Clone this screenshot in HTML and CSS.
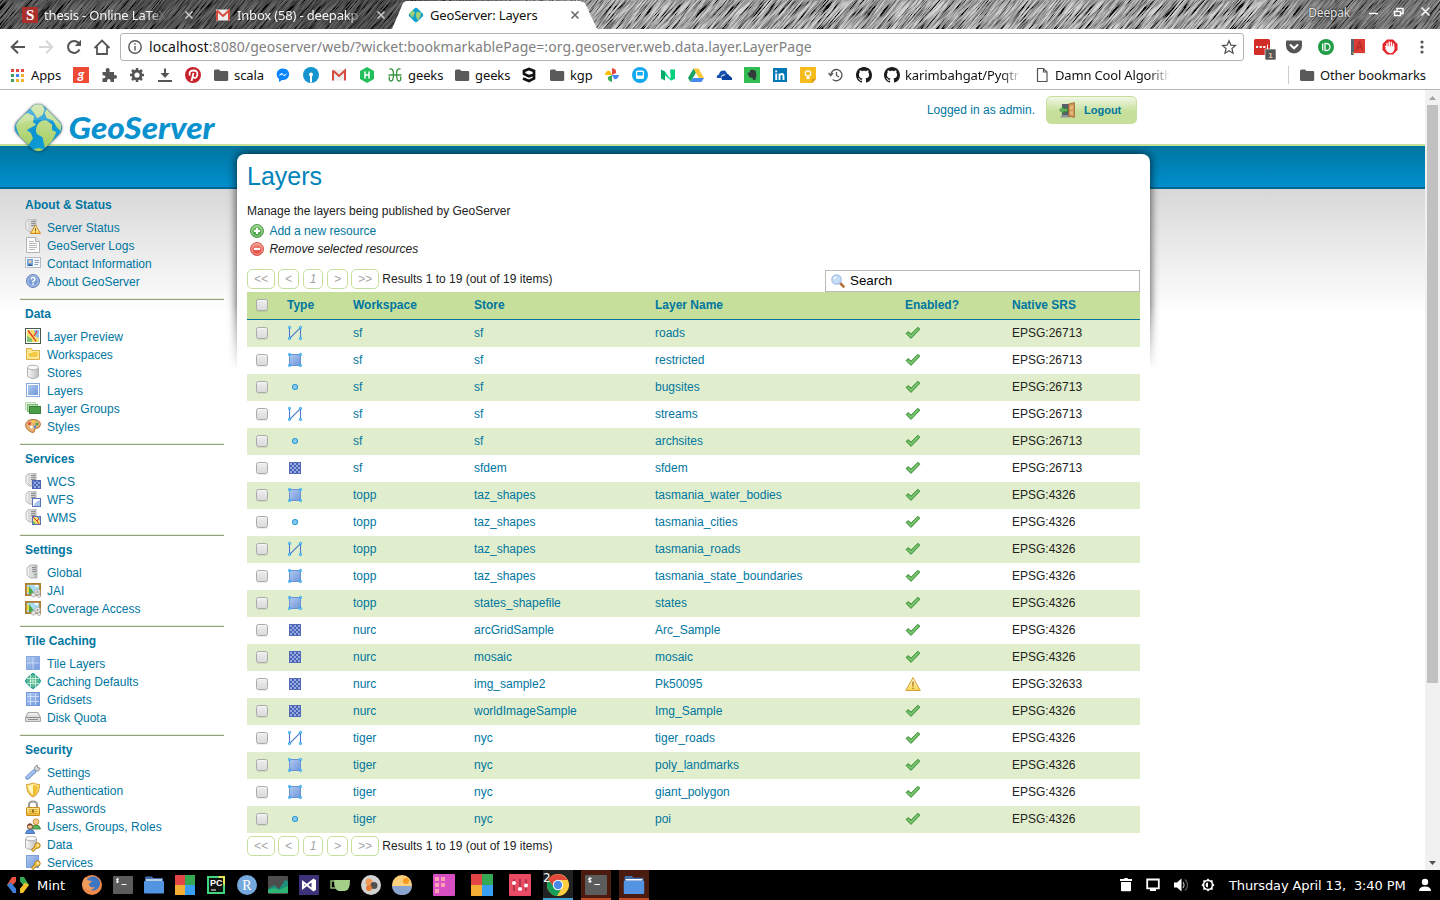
FILE: index.html
```html
<!DOCTYPE html>
<html lang="en">
<head>
<meta charset="utf-8">
<title>GeoServer: Layers</title>
<link rel="stylesheet" href="styles.css">
</head>
<body>
<svg class="defs" width="0" height="0">
<defs>
<filter id="hatch" x="0" y="0" width="100%" height="100%"><feTurbulence type="fractalNoise" baseFrequency="0.62 0.05" numOctaves="4" seed="4"/><feColorMatrix values="2.6 0 0 0 -.8  2.6 0 0 0 -.8  2.6 0 0 0 -.8  0 0 0 0 1"/></filter>
<linearGradient id="gSrv" x1="0" x2="1"><stop offset="0" stop-color="#fafafa"/><stop offset="1" stop-color="#bcbcbc"/></linearGradient>
<linearGradient id="gBlue" x1="0" y1="0" x2="1" y2="1"><stop offset="0" stop-color="#b0c9ef"/><stop offset="1" stop-color="#7097da"/></linearGradient>
<linearGradient id="gGreen" x1="0" y1="0" x2="0" y2="1"><stop offset="0" stop-color="#8fd080"/><stop offset="1" stop-color="#3a9436"/></linearGradient>
<linearGradient id="gRed" x1="0" y1="0" x2="0" y2="1"><stop offset="0" stop-color="#f59a90"/><stop offset="1" stop-color="#dd3a30"/></linearGradient>
<linearGradient id="gYel" x1="0" y1="0" x2="0" y2="1"><stop offset="0" stop-color="#fff0a0"/><stop offset="1" stop-color="#eeb72a"/></linearGradient>
<linearGradient id="gWarn" x1="0" y1="0" x2="0" y2="1"><stop offset="0" stop-color="#fffbe0"/><stop offset="1" stop-color="#f9d34e"/></linearGradient>
<linearGradient id="gGlobe" x1="0" y1="0" x2="1" y2="1"><stop offset="0" stop-color="#4fb8e2"/><stop offset=".5" stop-color="#0c93cf"/><stop offset="1" stop-color="#10a8e0"/></linearGradient>
<linearGradient id="gLand" x1="0" y1="0" x2="0" y2="1"><stop offset="0" stop-color="#d3e6b0"/><stop offset="1" stop-color="#9bcb50"/></linearGradient>
<clipPath id="dia"><rect x="7" y="7" width="36" height="36" rx="8" transform="rotate(45 25 25)"/></clipPath>
<pattern id="chk" width="4" height="4" patternUnits="userSpaceOnUse" x="1" y="1"><rect width="4" height="4" fill="#4a63b8"/><rect width="2" height="2" fill="#92aadc"/><rect x="2" y="2" width="2" height="2" fill="#92aadc"/></pattern>

<symbol id="line" viewBox="0 0 16 16"><path d="M2.500 13V2.500M2.500 13.500 13.500 2.500V13.500" fill="none" stroke="#4b7bd0" stroke-width="1.100"/><g fill="#8fd6fb" stroke="#1b9ff0" stroke-width="1"><circle cx="2.500" cy="2.500" r="1.100"/><circle cx="13.500" cy="2.500" r="1.100"/><circle cx="2.500" cy="13.500" r="1.100"/><circle cx="13.500" cy="13.500" r="1.100"/></g></symbol>
<symbol id="poly" viewBox="0 0 16 16"><rect x="2.500" y="2.500" width="11" height="11" fill="url(#gBlue)" stroke="#6b93d8"/><g fill="#8fd6fb" stroke="#1b9ff0" stroke-width="1"><circle cx="2.500" cy="2.500" r="1.100"/><circle cx="13.500" cy="2.500" r="1.100"/><circle cx="2.500" cy="13.500" r="1.100"/><circle cx="13.500" cy="13.500" r="1.100"/></g></symbol>
<symbol id="point" viewBox="0 0 16 16"><circle cx="8" cy="8" r="2.500" fill="#8dcaf0" stroke="#2a9ed8" stroke-width="1.100"/></symbol>
<symbol id="raster" viewBox="0 0 16 16"><rect x="2" y="2" width="12" height="12" fill="url(#chk)"/><rect x="2.500" y="2.500" width="11" height="11" fill="none" stroke="#5569b9"/></symbol>
<symbol id="tick" viewBox="0 0 16 16"><path d="M1 8.500 3.300 6.500 6 9 12.800 2.200 15 4.200 6 13.500z" fill="#58ae50" stroke="#3d8f3a" stroke-width=".8"/><path d="M3 8.500 6 11.200 13 4" fill="none" stroke="#84c97a" stroke-width="1.200"/></symbol>
<symbol id="warn" viewBox="0 0 16 16"><path d="M8 1.500 15.300 14.500H.7z" fill="url(#gWarn)" stroke="#d6a136" stroke-linejoin="round"/><path d="M8 5.500v5M8 11.700v1.400" stroke="#b07a1a" stroke-width="1.400"/></symbol>
<symbol id="srv" viewBox="0 0 16 16"><path d="M2 4 5 1h7v13H5L2 11z" fill="url(#gSrv)" stroke="#b0b0b0" stroke-width=".9"/><path d="M5 1.500V14" stroke="#cdcdcd"/><path d="M7 3.500h4M7 5.500h4M7 7.500h4" stroke="#8f8f8f" stroke-width="1"/><path d="M9.500 10.500h1.500" stroke="#4aa04a"/></symbol>
<symbol id="srvw" viewBox="0 0 16 16"><use href="#srv" width="16" height="16" x="-1" y="-1"/><path d="M10.500 6 15.500 14.500h-10z" fill="url(#gWarn)" stroke="#d08a20"/><path d="M10.500 9v3M10.500 12.700v1" stroke="#8b5a10"/></symbol>
<symbol id="logs" viewBox="0 0 16 16"><path d="M1.500.5h9l4 4v11h-13z" fill="#fcfcfc" stroke="#b2b2b2"/><path d="M10.500.5v4h4" fill="#e4e4e4" stroke="#b2b2b2"/><path d="M4 4.500h5M4 6.500h8M4 8.500h8M4 10.500h8M4 12.500h6" stroke="#a8a8a8" stroke-width=".8"/></symbol>
<symbol id="vcard" viewBox="0 0 16 16"><rect x=".5" y="2.500" width="15" height="10" fill="#f5f7fa" stroke="#b5bbc2"/><rect x="2" y="4" width="6" height="7" fill="#73a5df"/><circle cx="5" cy="6.500" r="1.500" fill="#f4d1a4"/><path d="M2.500 11q2.500-4 5 0z" fill="#365a9a"/><path d="M9.500 5.500H14M9.500 7.500H14M9.500 9.500H13" stroke="#8ba0b8"/></symbol>
<symbol id="help" viewBox="0 0 16 16"><circle cx="8" cy="8" r="6.500" fill="#7b9ed6" stroke="#6382b8"/><circle cx="8" cy="8" r="5.300" fill="none" stroke="#b2c7ea"/><path d="M6 6.300Q6.200 4.400 8 4.400T10 6.200Q10 7.300 8 8.300v1.200M8 10.500v1.500" fill="none" stroke="#fff" stroke-width="1.500"/></symbol>
<symbol id="map" viewBox="0 0 16 16"><rect x=".5" y=".5" width="15" height="15" fill="#fff" stroke="#4a5a4a"/><rect x="2" y="2" width="12" height="12" fill="#f3df6c"/><path d="M9 2h5v8l-3-1z" fill="#8fbff0"/><path d="M2 8 7 11v3H2z" fill="#7dc671"/><path d="M3 2.500 8 9l3 4.500M9 8l3-5" fill="none" stroke="#dc3b28" stroke-width="1.300"/></symbol>
<symbol id="folder" viewBox="0 0 16 16"><path d="M1.500 2.500h5l1 2h7v9h-13z" fill="#fce48c" stroke="#dfae45"/><path d="M3 6.500h4l1-1h5v6H3z" fill="#f3ca43" stroke="#fff3b8" stroke-width=".8"/></symbol>
<symbol id="db" viewBox="0 0 16 16"><path d="M2.500 3.500v9q5.500 4 11 0v-9" fill="url(#gSrv)" stroke="#b0b0b0"/><ellipse cx="8" cy="3.500" rx="5.500" ry="2.300" fill="#fafafa" stroke="#b0b0b0"/></symbol>
<symbol id="layer" viewBox="0 0 16 16"><rect x="1.500" y="1.500" width="13" height="13" fill="#fff" stroke="#8aa9e0"/><rect x="3" y="3" width="10" height="10" fill="url(#gBlue)"/></symbol>
<symbol id="layers" viewBox="0 0 16 16"><rect x=".5" y="2.500" width="10" height="7" fill="#e9f5e4" stroke="#b9d9b1"/><rect x="2.500" y="4.500" width="10" height="7" fill="#b7dcab" stroke="#7db874"/><rect x="4.500" y="6.500" width="11" height="7" fill="#4c9d48" stroke="#3a8239"/></symbol>
<symbol id="palette" viewBox="0 0 16 16"><path d="M8 1.500q7 0 7.500 5-.5 4-4.500 4-2 0-1.500 2T7 14.500Q.5 11.500.5 6.500 2 1.500 8 1.500z" fill="#e5b072" stroke="#b5733c"/><circle cx="4.500" cy="5.500" r="1.500" fill="#e04c3c"/><circle cx="8.500" cy="3.800" r="1.400" fill="#f4d73c"/><circle cx="12" cy="6" r="1.500" fill="#4fa850"/><circle cx="6.500" cy="9" r="1.500" fill="#fff"/><circle cx="10" cy="8.700" r="1.300" fill="#4b8ade"/></symbol>
<symbol id="wcs" viewBox="0 0 16 16"><use href="#srv" width="16" height="16" x="-1" y="-1"/><rect x="7.500" y="7.500" width="8" height="8" fill="url(#chk)" stroke="#4c62b2"/></symbol>
<symbol id="wfs" viewBox="0 0 16 16"><use href="#srv" width="16" height="16" x="-1" y="-1"/><rect x="7.500" y="7.500" width="8" height="8" fill="#fff" stroke="#5c70b8"/><path d="M9 15q0-4 6-6v6z" fill="#a9c6ef"/></symbol>
<symbol id="wms" viewBox="0 0 16 16"><use href="#srv" width="16" height="16" x="-1" y="-1"/><rect x="7.500" y="7.500" width="8" height="8" fill="#f3df6c" stroke="#5c70b8"/><path d="M12 8h3v4z" fill="#79b1ef"/><path d="m8 8 4 4 2 3M12 12l2-3" stroke="#d33" fill="none"/><path d="M8 12l3 3H8z" fill="#67b15c"/></symbol>
<symbol id="frame" viewBox="0 0 16 16"><rect x=".9" y="1.900" width="14.200" height="11.200" fill="#a8dcf4" stroke="#b07c2e" stroke-width="1.800"/><path d="M2 4v7l5-3z" fill="#f0d94a"/><path d="M4 12V4l6 8z" fill="#4ca84a"/><path d="m9 3 2 2h2V3z" fill="#fff"/><g fill="#e4e4e4" stroke="#a8a8a8" stroke-width=".7"><circle cx="12.500" cy="10" r="2.800"/><circle cx="8.500" cy="13" r="2.200"/><circle cx="14" cy="14" r="1.600"/></g><circle cx="12.500" cy="10" r="1" fill="#999"/></symbol>
<symbol id="tiles" viewBox="0 0 16 16"><rect x="1" y="1" width="14" height="14" fill="url(#gBlue)"/><path d="M8 1v14M1 8h14" stroke="#c9daf6" stroke-width="1"/><rect x="1.500" y="1.500" width="13" height="13" fill="none" stroke="#87a8e4"/></symbol>
<symbol id="cache" viewBox="0 0 16 16"><path d="M6 1.500Q8-.5 10 1.500L14.500 6q2 2 0 4L10 14.500q-2 2-4 0L1.500 10q-2-2 0-4z" fill="#54b894" stroke="#12918f"/><path d="M5.500 2v12M10.500 2v12M2 5.500h12M2 10.500h12M8 4.500v7M4.500 8h7" stroke="#e0f6df" stroke-width=".8"/></symbol>
<symbol id="grid" viewBox="0 0 16 16"><rect x="1" y="1" width="14" height="14" fill="url(#gBlue)"/><path d="M5.500 1v14M10.500 1v14M1 5.500h14M1 10.500h14" stroke="#d0dff8" stroke-width=".9"/><rect x="1.500" y="1.500" width="13" height="13" fill="none" stroke="#7398dc"/></symbol>
<symbol id="disk" viewBox="0 0 16 16"><path d="M3 3.500h10l2.500 5v4H.5v-4z" fill="#ddd" stroke="#a8a8a8"/><path d="M.8 8.500h14.500M3 10.500h10" stroke="#8c8c8c"/><path d="M4 5h8" stroke="#fff"/></symbol>
<symbol id="wrench" viewBox="0 0 16 16"><path d="m9.500 7 .2-4 2.600-2 .2 2.700 2.700.3-1.800 3-3.900.2z" fill="#d9d9d9" stroke="#8a8a8a" stroke-width=".9"/><path d="m2.500 13.500 6.500-6" stroke="#6f90cd" stroke-width="4.400" stroke-linecap="round"/><path d="m2.500 13.300 6.300-5.800" stroke="#a6c2ef" stroke-width="2.600" stroke-linecap="round"/></symbol>
<symbol id="shield" viewBox="0 0 16 16"><path d="M1.500 2.500Q5 2.500 8 1q3 1.500 6.500 1.500Q14.500 12 8 15 1.500 12 1.500 2.500z" fill="url(#gYel)" stroke="#d9a02c"/><path d="M3.500 4Q6 4 8 3v10Q4 10.500 3.500 4z" fill="#fff6c4"/><path d="M8 3q2 1 4.500 1Q12 10.500 8 13z" fill="#f1be30"/></symbol>
<symbol id="lock" viewBox="0 0 16 16"><path d="M4 8V5q0-3.500 4-3.500T12 5v3" fill="none" stroke="#9c9c9c" stroke-width="2.200"/><rect x="1.500" y="7.500" width="13" height="8" rx=".5" fill="url(#gYel)" stroke="#c98c20"/><path d="M3.500 9.500h9M3.500 11.500h9M3.500 13.500h9" stroke="#d79a24" stroke-width=".7"/><path d="M8 9.500v3" stroke="#7a5310" stroke-width="1.500"/></symbol>
<symbol id="users" viewBox="0 0 16 16"><path d="M6.500 11Q7 7 11 7t4.500 4z" fill="#5fb35a" stroke="#347f35" stroke-width=".8"/><circle cx="11" cy="3.800" r="2.900" fill="#f3ca8a" stroke="#c98a2c" stroke-width=".9"/><path d="M.6 15.500Q1 11.500 5 11.500t4.700 4z" fill="#5b93e0" stroke="#2f5fb0" stroke-width=".8"/><circle cx="5" cy="8.500" r="2.700" fill="#f2c79a" stroke="#74402a" stroke-width=".9"/><path d="M2.300 8Q3 5.500 5 5.500T7.700 8Q5 6.700 2.300 8z" fill="#74402a"/></symbol>
<symbol id="key" viewBox="0 0 16 16"><path d="m7 15 5-5" stroke="#b57812" stroke-width="3.200"/><circle cx="12.500" cy="9.500" r="2.700" fill="#f5cf55" stroke="#b57812"/><path d="m7.500 14.500 5-5" stroke="#f7d767" stroke-width="1.500"/><circle cx="13" cy="9" r=".8" fill="#fff"/></symbol>
<symbol id="dbkey" viewBox="0 0 16 16"><use href="#db" width="16" height="16" x="-2" y="-1"/><use href="#key" width="16" height="16"/></symbol>
<symbol id="svckey" viewBox="0 0 16 16"><rect x="1.500" y="1.500" width="12" height="12" fill="url(#gBlue)" stroke="#7d9fdb"/><use href="#key" width="16" height="16"/></symbol>
<symbol id="plus" viewBox="0 0 16 16"><circle cx="8" cy="8" r="6.500" fill="url(#gGreen)" stroke="#4f9a4c"/><circle cx="8" cy="8" r="5.300" fill="none" stroke="#b9e2af" stroke-width=".8"/><path d="M8 5v6M5 8h6" stroke="#fff" stroke-width="2"/></symbol>
<symbol id="minus" viewBox="0 0 16 16"><circle cx="8" cy="8" r="6.500" fill="url(#gRed)" stroke="#d0554b"/><circle cx="8" cy="8" r="5.300" fill="none" stroke="#f7bab3" stroke-width=".8"/><path d="M5 8h6" stroke="#fff" stroke-width="2"/></symbol>
<symbol id="search" viewBox="0 0 16 16"><path d="m10.500 10.500 3 3" stroke="#b3703a" stroke-width="2.600" stroke-linecap="round"/><circle cx="6.500" cy="6.500" r="4.700" fill="#c4dcf6" stroke="#a3c0e6" stroke-width="1.200"/><path d="M4 6q.5-2 2.500-2" fill="none" stroke="#fff" stroke-width="1.200"/></symbol>
<symbol id="door" viewBox="0 0 16 16"><path d="M3 2h8v11H3z" fill="#555f66"/><path d="M1 15.500 3 13h8v2.500z" fill="#8d949a"/><path d="m9.500 2 6-1.500v15l-6-1.500z" fill="#cf9355" stroke="#98602c" stroke-width=".7"/><path d="m11 4 3-.7v4L11 8zm0 5.500 3-.5v4l-3-.7z" fill="#e6b67d"/><path d="M.5 8 4.500 4.500v2h4v3.200h-4v2z" fill="#63b65e" stroke="#2d7f34" stroke-width=".7"/></symbol>

<symbol id="bfolder" viewBox="0 0 16 16"><path d="M1 4q0-1.500 1.500-1.500H6L7.500 4H14q1.200 0 1.200 1.200v7.300q0 1.500-1.500 1.500h-11Q1 14 1 12.500z" fill="#5a5a5a"/></symbol>
<symbol id="github" viewBox="0 0 16 16"><path fill="#1b1b1b" d="M8 0C3.580 0 0 3.580 0 8c0 3.540 2.290 6.530 5.470 7.590.4.070.55-.17.55-.38 0-.19-.01-.82-.01-1.490-2.010.37-2.530-.49-2.690-.94-.09-.23-.48-.94-.82-1.130-.28-.15-.68-.52-.01-.53.63-.01 1.080.58 1.230.82.72 1.210 1.870.87 2.330.66.070-.52.28-.87.51-1.070-1.780-.2-3.640-.89-3.640-3.950 0-.87.31-1.590.82-2.150-.08-.2-.36-1.020.08-2.120 0 0 .67-.21 2.200.82.64-.18 1.320-.27 2-.27s1.360.09 2 .27c1.530-1.040 2.200-.82 2.200-.82.44 1.100.16 1.920.08 2.120.51.56.82 1.270.82 2.150 0 3.070-1.870 3.750-3.650 3.950.29.25.54.73.54 1.480 0 1.070-.01 1.930-.01 2.200 0 .21.15.46.55.38A8.010 8.010 0 0 0 16 8c0-4.420-3.580-8-8-8z"/></symbol>
<symbol id="gmail" viewBox="0 0 16 16"><path d="M1 2.500h14v11H1z" fill="#ececec"/><path d="M2 3.500 8 9l6-5.500v10M2 13.500v-10" fill="none" stroke="#d54b3d" stroke-width="2"/></symbol>
<symbol id="term" viewBox="0 0 20 20"><rect y="1" width="20" height="18" rx="1" fill="#5c5c5c"/><path d="M6 4H4q-1.500 1 0 1.500t1.500 1.500H3M4.500 3v5M8.500 9.500h5" fill="none" stroke="#fff"/></symbol>
<symbol id="files" viewBox="0 0 20 20"><path d="M1 3q0-1.500 1-1.500h6L9.500 3H19v7H1z" fill="#3f6cab"/><rect x="0" y="6" width="20" height="12.500" rx="1" fill="#5294e2"/><path d="M2 5h16" stroke="#fff" stroke-width="1.300"/></symbol>
<symbol id="quad" viewBox="0 0 20 20"><path d="M0 0h10v10H0z" fill="#e34444"/><path d="M10 0h10v10H10z" fill="#35a853"/><path d="M0 10h10v10H0z" fill="#f3ae35"/><path d="M10 10h10v10H10z" fill="#389ff3"/></symbol>
<symbol id="close" viewBox="0 0 10 10"><path d="m1.500 1.500 7 7m0-7-7 7" fill="none" stroke="currentColor" stroke-width="1.500"/></symbol>
</defs>
</svg>

<div class="tabstrip">
  <svg class="hatch" width="1540" height="29"><rect width="1540" height="29" filter="url(#hatch)"/></svg>
  <div class="tab"><svg width="16" height="16" viewBox="0 0 16 16"><rect width="16" height="16" fill="#a9302c"/><text x="8" y="13" class="fav-s">S</text></svg><span class="tab-title">thesis - Online LaTeX</span><svg class="x" width="10" height="10"><use href="#close"/></svg></div>
  <div class="tab second"><svg width="16" height="16"><use href="#gmail"/></svg><span class="tab-title">Inbox (58) - deepakp</span><svg class="x" width="10" height="10"><use href="#close"/></svg></div>
  <div class="tab active"><svg width="16" height="16" viewBox="0 0 50 50"><g clip-path="url(#dia)"><path d="M0 0h50v50H0z" fill="#129fca"/><path d="M4 20 14 10l8 8-8 16zM27 15l14 2-2 12-8 14-7-16z" fill="#9fd078"/></g></svg><span class="tab-title">GeoServer: Layers</span><svg class="x" width="10" height="10"><use href="#close"/></svg></div>
  <div class="wincontrols"><span>Deepak</span><svg width="64" height="14" viewBox="0 0 64 14" fill="none" stroke="#fff" stroke-width="1.500"><path d="M1 7.500h9M26.500 5.500h6v4h-6zM29 4.500v-2h6v5h-2.500M53.500 1.500l8 8m0-8-8 8"/></svg></div>
</div>

<div class="toolbar">
  <svg width="16" height="16" viewBox="0 0 16 16" fill="none" stroke="#555" stroke-width="2"><path d="M15 8H2M8 1.700 1.700 8 8 14.300"/></svg>
  <svg width="16" height="16" viewBox="0 0 16 16" fill="none" stroke="#d6d6d6" stroke-width="2"><path d="M1 8h13M8 1.700 14.300 8 8 14.300"/></svg>
  <svg width="16" height="16" viewBox="0 0 16 16" fill="none" stroke="#555" stroke-width="2"><path d="M13.500 10.500A6 6 0 1 1 12.600 4"/><path d="M15 .8V7H8.800z" fill="#555" stroke="none"/></svg>
  <svg width="18" height="16" viewBox="0 0 18 16" fill="none" stroke="#555" stroke-width="1.800"><path d="M.5 9 8 1.500 15.500 9M3 7.500V15h10V7.500"/></svg>
  <div class="omnibox">
    <svg width="14" height="14" viewBox="0 0 14 14" fill="none" stroke="#555" stroke-width="1.400"><circle cx="7" cy="7" r="6.200"/><path d="M7 6v4.500M7 3.300v1.500"/></svg>
    <span class="url"><b>localhost</b>:8080/geoserver/web/?wicket:bookmarkablePage=:org.geoserver.web.data.layer.LayerPage</span>
    <svg width="16" height="16" viewBox="0 0 16 16" fill="none" stroke="#555" stroke-width="1.300"><path d="m8 1.800 1.900 4.300 4.600.4L11 9.600l1 4.600-4-2.400-4 2.400 1-4.600-3.500-3.100 4.600-.4z"/></svg>
  </div>
  <div class="exts">
    <svg width="24" height="24" viewBox="0 0 24 24"><rect x="2" y="3" width="16" height="16" rx="1.500" fill="#d32d27"/><path d="M4 11h2.200M7.600 11h2.200M11.200 11h2.200" stroke="#fff" stroke-width="2.200"/><path d="M15.500 8.500v5" stroke="#fff" stroke-width="1"/><rect x="13" y="13" width="11" height="11" rx="1" fill="#555" stroke="#fff" stroke-width=".6"/><text x="18.500" y="21.500" class="badge">1</text></svg>
    <svg width="16" height="16" viewBox="0 0 16 16"><path d="M1 1.500h14q1 0 1 1V7q-.5 6.500-8 7.500Q.5 13.500 0 7V2.500q0-1 1-1z" fill="#555"/><path d="m4.500 6 3.500 3.300L11.500 6" fill="none" stroke="#fff" stroke-width="2" stroke-linecap="round"/></svg>
    <svg width="16" height="16" viewBox="0 0 16 16"><circle cx="8" cy="8" r="8" fill="#1f9d45"/><path d="M4.700 4.500v7M7 4.500h1.500a3.500 3.500 0 0 1 0 7H7z" fill="none" stroke="#fff" stroke-width="1.300"/></svg>
    <svg width="16" height="16" viewBox="0 0 16 16"><path d="M1 0h3v16H1z" fill="#56666f"/><path d="M4 0h11v14H4z" fill="#dd3b35"/><path d="M4 14h11v1.500H4z" fill="#eee"/><path d="m6.500 11 3-8 3 8m-5-2.500h4" fill="none" stroke="#b52c29" stroke-width="1.400"/><path d="m2 13 2 1v2z" fill="#f5c236"/></svg>
    <svg width="16" height="16" viewBox="0 0 16 16"><path d="M5 .5h6L15.500 5v6L11 15.500H5L.5 11V5z" fill="#e4252c"/><path d="M5 8.500V4.500M7.200 8V3M9.400 8V3.500M11.500 9V5M5 8.500l-1.500-1M5 8h6.800v2q-1 3.500-3.500 3.500Q6 13.500 4 9.500z" fill="#fff" stroke="#fff" stroke-width="1.400" stroke-linecap="round"/></svg>
    <svg width="16" height="16" viewBox="0 0 16 16" fill="#555"><circle cx="8" cy="3" r="1.600"/><circle cx="8" cy="8" r="1.600"/><circle cx="8" cy="13" r="1.600"/></svg>
  </div>
</div>

<div class="bookmarks">
  <div class="bm"><svg width="16" height="16" viewBox="0 0 16 16"><path d="M2 2h3v3H2zM7 2h3v3H7zM12 2h3v3h-3z" fill="#e2483d"/><path d="M2 7h3v3H2z" fill="#3d9f58"/><path d="M7 7h3v3H7z" fill="#4285f4"/><path d="M12 7h3v3h-3zM12 12h3v3h-3zM7 12h3v3H7z" fill="#f2b32c"/><path d="M2 12h3v3H2z" fill="#3d9f58"/></svg><span class="w-apps">Apps</span></div>
  <svg width="16" height="16" viewBox="0 0 16 16"><rect width="16" height="16" fill="#ee4b36"/><text x="8" y="11.500" class="fav-g">g</text></svg>
  <svg width="16" height="16" viewBox="0 0 16 16"><path d="M1.500 5H5q-1-4 1.700-4T8.500 5H13v3.300q3-.8 3 1.600t-3 1.600V15H9.500q.5-3-1.700-3t-1.600 3H1.500v-3.800q3 .4 3-1.500t-3-1.500z" fill="#555"/></svg>
  <svg width="16" height="16" viewBox="0 0 16 16"><circle cx="8" cy="8" r="4" fill="none" stroke="#555" stroke-width="2.800"/><path d="M8 1v2.500M8 12.500V15M1 8h2.500M12.500 8H15M3 3l2 2M11 11l2 2M3 13l2-2M11 5l2-2" stroke="#555" stroke-width="2.500"/></svg>
  <svg width="16" height="16" viewBox="0 0 16 16"><path d="M8 1.500v7M1 14h14" fill="none" stroke="#555" stroke-width="2"/><path d="M3.500 6h9L8 11z" fill="#555"/></svg>
  <svg width="16" height="16" viewBox="0 0 16 16"><circle cx="8" cy="8" r="8" fill="#c8232c"/><path d="M6.500 14 8.500 6M4.800 8.600Q3.500 3.500 8.300 3.500t4 4.500-5 2" fill="none" stroke="#fff" stroke-width="1.800"/></svg>
  <div class="bm"><svg width="16" height="16"><use href="#bfolder"/></svg><span class="w-scala">scala</span></div>
  <svg width="16" height="16" viewBox="0 0 16 16"><path d="M8 1.500c7.500 0 8.500 10 1 11.500H7l-3 2v-3C-.5 8 2 1.500 8 1.500z" fill="#0a84ff"/><path d="m3.500 9 3-3.200L9 8l3.500-2-3 3.300L7 7.500z" fill="#fff"/></svg>
  <svg width="16" height="16" viewBox="0 0 16 16"><circle cx="8" cy="8" r="8" fill="#1494cf"/><circle cx="8" cy="7.500" r="2" fill="#fff"/><path d="M7 8h2v7.500H7z" fill="#fff"/></svg>
  <svg width="16" height="16"><use href="#gmail"/></svg>
  <svg width="16" height="16" viewBox="0 0 16 16"><path d="m8 0 7 4v8l-7 4-7-4V4z" fill="#24be5a"/><path d="M6 4.500v7M10 4.500v7M6 8h4" stroke="#fff" stroke-width="1.500"/></svg>
  <div class="bm"><svg width="16" height="16" viewBox="0 0 16 16" fill="none" stroke="#3a9442" stroke-width="1.400"><path d="M2.500 2Q6.500 1 6.500 7q0 7-2.500 7T2.500 9.500M13.500 2Q9.500 1 9.500 7q0 7 2.500 7t1.500-4.500M1.500 8h13"/></svg><span class="w-geeks">geeks</span></div>
  <div class="bm"><svg width="16" height="16"><use href="#bfolder"/></svg><span class="w-geeks">geeks</span></div>
  <svg width="16" height="16" viewBox="0 0 16 16"><path d="M13 7.500 8 9.300 3 7V4l5-2 5 2v7.500L8 14l-6-2.500" fill="none" stroke="#111" stroke-width="2.700"/></svg>
  <div class="bm"><svg width="16" height="16"><use href="#bfolder"/></svg><span class="w-kgp">kgp</span></div>
  <svg width="16" height="16" viewBox="0 0 16 16"><path d="M8 8V1q5 1 4 5z" fill="#e8453c"/><path d="M8 8h7q-1 5-5 4z" fill="#4688f1"/><path d="M8 8v7q-5-1-4-5z" fill="#3aa757"/><path d="M8 8H1q1-5 5-4z" fill="#fbbc05"/></svg>
  <svg width="16" height="16" viewBox="0 0 16 16"><circle cx="8" cy="8" r="8" fill="#12a9ef"/><rect x="4" y="3.500" width="8" height="8.500" rx="1.500" fill="#fff"/><path d="M5.200 5h5.600v3.500H5.200zM5 12h1.500v1.500H5zM9.500 12H11v1.500H9.500z" fill="#12a9ef"/></svg>
  <svg width="16" height="16" viewBox="0 0 16 16"><path d="M1 2.500 5 4.500v9l-4-2z" fill="#00ab6c"/><path d="m5 4.500 5 7 5-9v9l-4 2-6-5z" fill="#12d988"/><path d="m10 2.500 5 0v9l-4 2z" fill="#00cf7d"/></svg>
  <svg width="16" height="16" viewBox="0 0 16 16"><path d="M5.500 1.500 0 11l2.500 4L8 5.500z" fill="#19a463"/><path d="M5.500 1.500h5L16 11h-5z" fill="#fbc835"/><path d="M5 11h11l-2.500 4h-11z" fill="#4688f1"/></svg>
  <svg width="16" height="16" viewBox="0 0 16 16"><path d="M1 11q-1-3 2-3.500Q4 3 8 3.500q3 .5 3 4h-3q-3 0-3 3.500z" fill="#1451ac"/><path d="M6 13q-2-4 2.500-4.500 3-3.500 5 .5 3 .5 2.500 4z" fill="#0842a0"/></svg>
  <svg width="16" height="16" viewBox="0 0 16 16"><rect width="16" height="16" fill="#31bd51"/><path d="M3.500 5.500H6V3q5-1 6 1.500.9 4-.5 8-3 1.500-2.500-1L7 10.500q-2 1-3.500-5z" fill="#333b3b"/></svg>
  <svg width="16" height="16" viewBox="0 0 16 16"><rect x="1" y="1" width="14" height="14" fill="#0077b5"/><path d="M4.200 6.500V13M7.500 13V6.500M4.200 3.500v1.700M7.500 9q.5-2 2.200-2t1.800 2v4" fill="none" stroke="#fff" stroke-width="1.900"/></svg>
  <svg width="16" height="16" viewBox="0 0 16 16"><path d="M0 0h16v12l-4 4H0z" fill="#f6bb1c"/><path d="M16 12h-4v4z" fill="#d99a10"/><circle cx="8" cy="6.500" r="2.700" fill="none" stroke="#fff" stroke-width="1.200"/><path d="M6.500 10h3v2h-3z" fill="#fff"/></svg>
  <svg width="16" height="16" viewBox="0 0 16 16" fill="none" stroke="#555" stroke-width="1.300"><path d="M2.700 8a5.600 5.600 0 1 1 2 4.400M.5 6l2.200 2.700L5 6M8.500 5v3.500l2.500 1.500"/></svg>
  <svg width="16" height="16"><use href="#github"/></svg>
  <div class="bm"><svg width="16" height="16"><use href="#github"/></svg><span class="w-karim fade">karimbahgat/Pyqtr</span></div>
  <div class="bm"><svg width="16" height="16" viewBox="0 0 16 16"><path d="M3.500 1.500h6l3.500 3.500v9.500H3.500zM9.500 1.500V5H13" fill="#fff" stroke="#555" stroke-width="1.200"/></svg><span class="w-damn fade">Damn Cool Algorith</span></div>
  <div class="bm other"><svg width="16" height="16"><use href="#bfolder"/></svg><span>Other bookmarks</span></div>
</div>

<div class="viewport">
  <div class="page">
    <header class="header">
      <svg class="logo" width="210" height="56" viewBox="0 0 210 56"><g transform="translate(.8 1.300) scale(1.060)"><rect x="7" y="7" width="36" height="36" rx="8" transform="rotate(45 25 25)" class="logo-shade"/><g clip-path="url(#dia)"><path d="M0 0h50v50H0z" fill="url(#gGlobe)"/><path d="M4 23Q8 13 15 11l6 3-1 6 3 2-5 3-4 2 4 3 2 5-4 6-7-5-3-6zM17 6 24 0l5 3 2 5-2 5-5 3-3-5zM25 21q3-4 8-3l5 4v5l4 2-4 9-4 6-3-1-2-9-5-3q-3-4 1-10zM33 7l14 15-1 6-4-4-3-6-6-2-2-5zM16 47l9-3 9 2-9 6z" fill="url(#gLand)"/><path d="M0 25 25 0 50 25Q25 10 0 25z" fill="#fff" opacity=".18"/></g></g><text x="57.500" y="38.500" textLength="146" lengthAdjust="spacingAndGlyphs">GeoServer</text></svg>
      <div class="session"><span>Logged in as admin.</span><a class="logout"><svg width="16" height="16"><use href="#door"/></svg>Logout</a></div>
    </header>
    <div class="main">
      <nav class="sidebar">
        <section><h3>About &amp; Status</h3><ul>
          <li><svg><use href="#srvw"/></svg>Server Status</li><li><svg><use href="#logs"/></svg>GeoServer Logs</li><li><svg><use href="#vcard"/></svg>Contact Information</li><li><svg><use href="#help"/></svg>About GeoServer</li></ul></section>
        <section><h3>Data</h3><ul>
          <li><svg><use href="#map"/></svg>Layer Preview</li><li><svg><use href="#folder"/></svg>Workspaces</li><li><svg><use href="#db"/></svg>Stores</li><li><svg><use href="#layer"/></svg>Layers</li><li><svg><use href="#layers"/></svg>Layer Groups</li><li><svg><use href="#palette"/></svg>Styles</li></ul></section>
        <section><h3>Services</h3><ul>
          <li><svg><use href="#wcs"/></svg>WCS</li><li><svg><use href="#wfs"/></svg>WFS</li><li><svg><use href="#wms"/></svg>WMS</li></ul></section>
        <section><h3>Settings</h3><ul>
          <li><svg><use href="#srv"/></svg>Global</li><li><svg><use href="#frame"/></svg>JAI</li><li><svg><use href="#frame"/></svg>Coverage Access</li></ul></section>
        <section><h3>Tile Caching</h3><ul>
          <li><svg><use href="#tiles"/></svg>Tile Layers</li><li><svg><use href="#cache"/></svg>Caching Defaults</li><li><svg><use href="#grid"/></svg>Gridsets</li><li><svg><use href="#disk"/></svg>Disk Quota</li></ul></section>
        <section><h3>Security</h3><ul>
          <li><svg><use href="#wrench"/></svg>Settings</li><li><svg><use href="#shield"/></svg>Authentication</li><li><svg><use href="#lock"/></svg>Passwords</li><li><svg><use href="#users"/></svg>Users, Groups, Roles</li><li><svg><use href="#dbkey"/></svg>Data</li><li><svg><use href="#svckey"/></svg>Services</li></ul></section>
      </nav>
      <div class="panel">
        <div class="shade"><div class="shade-box"></div></div>
        <div class="content">
          <h1>Layers</h1>
          <p class="desc">Manage the layers being published by GeoServer</p>
          <ul class="actions"><li><svg><use href="#plus"/></svg>Add a new resource</li><li class="off"><svg><use href="#minus"/></svg>Remove selected resources</li></ul>
          <div class="tools">
            <div class="pager"><span class="wide">&lt;&lt;</span><span>&lt;</span><span class="cur">1</span><span>&gt;</span><span class="wide">&gt;&gt;</span><em>Results 1 to 19 (out of 19 items)</em></div>
            <div class="search"><svg width="16" height="16"><use href="#search"/></svg>Search</div>
          </div>
          <table>
            <colgroup><col class="c1"><col class="c2"><col class="c3"><col class="c4"><col class="c5"><col class="c6"><col class="c7"></colgroup>
            <thead><tr><th><i class="cb"></i></th><th>Type</th><th>Workspace</th><th>Store</th><th>Layer Name</th><th>Enabled?</th><th>Native SRS</th></tr></thead>
            <tbody>
<tr><td><i class="cb"></i></td><td><svg><use href="#line"/></svg></td><td>sf</td><td>sf</td><td>roads</td><td><svg><use href="#tick"/></svg></td><td>EPSG:26713</td></tr>
<tr><td><i class="cb"></i></td><td><svg><use href="#poly"/></svg></td><td>sf</td><td>sf</td><td>restricted</td><td><svg><use href="#tick"/></svg></td><td>EPSG:26713</td></tr>
<tr><td><i class="cb"></i></td><td><svg><use href="#point"/></svg></td><td>sf</td><td>sf</td><td>bugsites</td><td><svg><use href="#tick"/></svg></td><td>EPSG:26713</td></tr>
<tr><td><i class="cb"></i></td><td><svg><use href="#line"/></svg></td><td>sf</td><td>sf</td><td>streams</td><td><svg><use href="#tick"/></svg></td><td>EPSG:26713</td></tr>
<tr><td><i class="cb"></i></td><td><svg><use href="#point"/></svg></td><td>sf</td><td>sf</td><td>archsites</td><td><svg><use href="#tick"/></svg></td><td>EPSG:26713</td></tr>
<tr><td><i class="cb"></i></td><td><svg><use href="#raster"/></svg></td><td>sf</td><td>sfdem</td><td>sfdem</td><td><svg><use href="#tick"/></svg></td><td>EPSG:26713</td></tr>
<tr><td><i class="cb"></i></td><td><svg><use href="#poly"/></svg></td><td>topp</td><td>taz_shapes</td><td>tasmania_water_bodies</td><td><svg><use href="#tick"/></svg></td><td>EPSG:4326</td></tr>
<tr><td><i class="cb"></i></td><td><svg><use href="#point"/></svg></td><td>topp</td><td>taz_shapes</td><td>tasmania_cities</td><td><svg><use href="#tick"/></svg></td><td>EPSG:4326</td></tr>
<tr><td><i class="cb"></i></td><td><svg><use href="#line"/></svg></td><td>topp</td><td>taz_shapes</td><td>tasmania_roads</td><td><svg><use href="#tick"/></svg></td><td>EPSG:4326</td></tr>
<tr><td><i class="cb"></i></td><td><svg><use href="#poly"/></svg></td><td>topp</td><td>taz_shapes</td><td>tasmania_state_boundaries</td><td><svg><use href="#tick"/></svg></td><td>EPSG:4326</td></tr>
<tr><td><i class="cb"></i></td><td><svg><use href="#poly"/></svg></td><td>topp</td><td>states_shapefile</td><td>states</td><td><svg><use href="#tick"/></svg></td><td>EPSG:4326</td></tr>
<tr><td><i class="cb"></i></td><td><svg><use href="#raster"/></svg></td><td>nurc</td><td>arcGridSample</td><td>Arc_Sample</td><td><svg><use href="#tick"/></svg></td><td>EPSG:4326</td></tr>
<tr><td><i class="cb"></i></td><td><svg><use href="#raster"/></svg></td><td>nurc</td><td>mosaic</td><td>mosaic</td><td><svg><use href="#tick"/></svg></td><td>EPSG:4326</td></tr>
<tr><td><i class="cb"></i></td><td><svg><use href="#raster"/></svg></td><td>nurc</td><td>img_sample2</td><td>Pk50095</td><td><svg><use href="#warn"/></svg></td><td>EPSG:32633</td></tr>
<tr><td><i class="cb"></i></td><td><svg><use href="#raster"/></svg></td><td>nurc</td><td>worldImageSample</td><td>Img_Sample</td><td><svg><use href="#tick"/></svg></td><td>EPSG:4326</td></tr>
<tr><td><i class="cb"></i></td><td><svg><use href="#line"/></svg></td><td>tiger</td><td>nyc</td><td>tiger_roads</td><td><svg><use href="#tick"/></svg></td><td>EPSG:4326</td></tr>
<tr><td><i class="cb"></i></td><td><svg><use href="#poly"/></svg></td><td>tiger</td><td>nyc</td><td>poly_landmarks</td><td><svg><use href="#tick"/></svg></td><td>EPSG:4326</td></tr>
<tr><td><i class="cb"></i></td><td><svg><use href="#poly"/></svg></td><td>tiger</td><td>nyc</td><td>giant_polygon</td><td><svg><use href="#tick"/></svg></td><td>EPSG:4326</td></tr>
<tr><td><i class="cb"></i></td><td><svg><use href="#point"/></svg></td><td>tiger</td><td>nyc</td><td>poi</td><td><svg><use href="#tick"/></svg></td><td>EPSG:4326</td></tr>
            </tbody>
          </table>
          <div class="pager bottom"><span class="wide">&lt;&lt;</span><span>&lt;</span><span class="cur">1</span><span>&gt;</span><span class="wide">&gt;&gt;</span><em>Results 1 to 19 (out of 19 items)</em></div>
        </div>
      </div>
    </div>
  </div>
  <div class="scrollbar"><svg width="15" height="15"><path d="M4 10h7L7.500 6z" fill="#a3a3a3"/></svg><div class="track"><div class="thumb"></div></div><svg width="15" height="15"><path d="M4 6h7l-3.500 4z" fill="#505050"/></svg></div>
</div>

<div class="taskbar">
  <div class="menu"><svg width="24" height="18" viewBox="0 0 24 18"><path d="M6 1h4v5L5 12 1 9z" fill="#e8523f"/><path d="m1 9 4-2.500 5 5.500v5H7z" fill="#3b7dd8"/><path d="M14 1h4l5 8-4 3-5-6z" fill="#35a853"/><path d="m23 9-6 8h-3v-5l5-5.500z" fill="#f6c12d"/><path d="M10 5.500 7 9l3 3.500zM14 5.500 17 9l-3 3.500z" fill="#000"/></svg><span>Mint</span></div>
  <div class="launchers">
    <svg viewBox="0 0 20 20"><circle cx="10" cy="10" r="10" fill="#ee8a4b"/><circle cx="11" cy="8.500" r="7" fill="#3f76c4"/><path d="M0 9Q1 3 4 2l1 3 5 1-3 3q0 4 6 3-3 5-9 2Q0 12 0 9z" fill="#f19a5b"/></svg>
    <svg viewBox="0 0 20 20"><use href="#term"/></svg>
    <svg viewBox="0 0 20 20"><use href="#files"/></svg>
    <svg viewBox="0 0 20 20"><use href="#quad"/></svg>
    <svg viewBox="0 0 20 20"><rect x="1" y="1" width="18" height="18" fill="#3fd67b"/><path d="M12 1h7v10z" fill="#e8ea58"/><rect x="3" y="3" width="14" height="14" fill="#111"/><text x="4" y="11" class="pc">PC</text><path d="M5 15h5" stroke="#fff"/></svg>
    <svg viewBox="0 0 20 20"><circle cx="10" cy="10" r="10" fill="#75a8db"/><text x="10" y="15" class="rr">R</text></svg>
    <svg viewBox="0 0 20 20"><rect y="1" width="20" height="18" rx="1" fill="#4d4d4d"/><path d="m0 14 6-4 5 4 6-9 3 1v11q0 1-1 1H1q-1 0-1-1z" fill="#1f8f7c"/><path d="m0 15 6-2 5 2 9-4v7H0z" fill="#2bb673"/></svg>
    <svg viewBox="0 0 20 20"><rect width="20" height="20" fill="#3b3278"/><path d="m4 7 9.500 7.500V5.500L4 13z" fill="none" stroke="#fff" stroke-width="2"/><path d="M14 3.500 17 5v10l-3 1.500z" fill="#fff"/></svg>
    <svg viewBox="0 0 20 20"><path d="M4 5h16q0 11-5 11H9Q4 16 4 5z" fill="#a4cf88"/><path d="M5 6H1v7h6" fill="none" stroke="#8cbb70" stroke-width="1.500"/></svg>
    <svg viewBox="0 0 20 20"><circle cx="10" cy="10" r="10" fill="#d2d2d2"/><circle cx="8" cy="7" r="3.500" fill="#f09a5a"/><circle cx="13" cy="10.500" r="3.500" fill="#4f4f4f"/><circle cx="8" cy="13" r="3" fill="#e77b35"/></svg>
    <svg viewBox="0 0 20 20"><circle cx="10" cy="10" r="10" fill="#fdd07b"/><path d="M0 11h20q-1 9-10 9T0 11z" fill="#8ba4cf"/><circle cx="14" cy="6" r="3" fill="#f79a1e"/></svg>
  </div>
  <div class="windows">
    <div class="win"><svg viewBox="0 0 22 22"><rect width="22" height="22" rx="1" fill="#d74fc3"/><path d="M2 3h4v4H2zm6 0h4v4H8zM2 9h4v4H2zm6 0h4v4H8zM2 15h4v4H2z" fill="#ff9fb4"/></svg></div>
    <div class="win"><svg viewBox="0 0 20 20"><use href="#quad"/></svg></div>
    <div class="win"><svg viewBox="0 0 22 22"><rect width="22" height="22" rx="1" fill="#e94a64"/><path d="M5 5v12M11 5v12M17 5v12" stroke="#a22c40" stroke-width="1.500"/><circle cx="5" cy="9" r="2" fill="#fff"/><circle cx="11" cy="15" r="2" fill="#fff"/><circle cx="17" cy="11.500" r="2" fill="#fff"/></svg></div>
    <div class="win chrome"><svg viewBox="0 0 22 22"><circle cx="11" cy="11" r="11" fill="#ffcd40"/><path d="M1.500 5.500a11 11 0 0 1 19 .5H11L6 13z" fill="#e0483c"/><path d="M1.500 5.500A11 11 0 0 0 10 22l5-8.500-7 1z" fill="#139d59"/><circle cx="11" cy="11" r="5.200" fill="#fff"/><circle cx="11" cy="11" r="4.200" fill="#4a88ee"/></svg><b>2</b></div>
    <div class="win open"><svg viewBox="0 0 20 20"><use href="#term"/></svg></div>
    <div class="win open"><svg viewBox="-.5 0 21 20"><use href="#files" width="20" height="20"/></svg></div>
  </div>
  <div class="tray">
    <svg width="14" height="14" viewBox="0 0 14 14" fill="#fff"><path d="M1 1h4l.5-1h3L9 1h4v2H1zM2 4h10v8.500q0 .8-1 .8H3q-1 0-1-.8z"/></svg>
    <svg width="14" height="14" viewBox="0 0 14 14"><path d="M1.200 1.500h11.600v8.800H1.200z" fill="none" stroke="#fff" stroke-width="1.800"/><path d="M4 11h6v2H4z" fill="#fff"/></svg>
    <svg width="14" height="14" viewBox="0 0 14 14"><path d="M0 4.500h3L7.500.5v13L3 9.500H0z" fill="#fff"/><path d="M9 4q2 3 0 6" fill="none" stroke="#aaa" stroke-width="1.200"/><path d="M11 1.500q5 5.500 0 11" fill="none" stroke="#555" stroke-width="1.300"/></svg>
    <svg width="14" height="14" viewBox="0 0 14 14"><path d="M7 .5 8.900 2.300h2.800v2.800L13.500 7l-1.800 1.900v2.800H8.900L7 13.500l-1.900-1.800H2.300V8.900L.5 7l1.800-1.900V2.300h2.800zM7 3.300a3.700 3.700 0 1 0 0 7.400 3.700 3.700 0 0 0 0-7.400z" fill="#fff" fill-rule="evenodd"/><path d="M7 4.600a2.400 2.400 0 0 0 0 4.800z" fill="#fff"/></svg>
    <span class="clock">Thursday April 13,&nbsp; 3:40 PM</span>
    <svg width="14" height="14" viewBox="0 0 14 14" fill="#fff"><circle cx="7" cy="4" r="3.200"/><path d="M1 13q0-4.500 6-4.500t6 4.500z"/></svg>
  </div>
</div>
</body>
</html>
```
FILE: styles.css
```css
* { box-sizing: border-box; }
html, body { margin: 0; padding: 0; }
body { width: 1440px; height: 900px; overflow: hidden; display: flex; flex-direction: column; background: #fff; font: 12px "Liberation Sans", Arial, sans-serif; color: #222; }
ul, h1, h3, p { margin: 0; padding: 0; list-style: none; }
svg { display: block; flex: none; }
.defs { position: absolute; }

/* browser chrome */
.tabstrip { position: relative; height: 29px; flex: none; overflow: hidden; display: flex; background: #333; font: 13px "Noto Sans", sans-serif; letter-spacing: -.17px; }
.hatch { position: absolute; left: -50px; top: 0; transform: skewX(-40deg); }
.tabstrip::before { content: ""; position: absolute; inset: 0; z-index: 1; background: linear-gradient(90deg, rgba(0,0,0,.55), rgba(0,0,0,.6) 380px, rgba(50,50,50,.2) 620px, rgba(50,50,50,.2) 1280px, rgba(40,40,40,.5) 1320px); }
.tab { position: relative; z-index: 2; display: flex; align-items: center; gap: 6px; width: 193px; padding: 1px 0 0 22px; color: #f4f4f4; }
.tab-title { width: 127px; white-space: nowrap; -webkit-mask: linear-gradient(90deg, #000 86%, transparent 100%); mask: linear-gradient(90deg, #000 86%, transparent 100%); }
.x { margin-left: 12px; color: #ccc; }
.tab.second { width: 199px; }
.tab.second .x { margin-left: 6px; }
.tab.active { width: 206px; padding-left: 16px; background: #fff; color: #111; clip-path: polygon(0 100%, 11px 3px, 14px 1px, 188px 1px, 193px 3px, 205px 100%); }
.tab.active .tab-title { -webkit-mask: none; mask: none; width: 127px; }
.tab.active .x { color: #666; margin-left: 7px; }
.fav-s { font: bold 15px "Liberation Serif", serif; fill: #fff; text-anchor: middle; }
.fav-g { font: italic bold 13px "Lato", sans-serif; fill: #fff; text-anchor: middle; }
.wincontrols { position: relative; z-index: 2; margin-left: auto; padding-right: 8px; display: flex; align-items: center; gap: 18px; height: 25px; font-size: 12px; color: #e2e2e2; text-shadow: 0 0 2px #000; }
.toolbar { height: 34px; flex: none; display: flex; align-items: center; gap: 12px; padding: 1px 10px 0 10px; }
.omnibox { width: 1124px; height: 28px; margin: 1px 0 0 -4px; border: 1px solid #b4b4b4; border-radius: 3px; display: flex; align-items: center; gap: 7px; padding: 0 6px 0 7px; }
.url { flex: 1; font: 14px "Noto Sans", sans-serif; line-height: 18px; letter-spacing: .065px; color: #808080; white-space: nowrap; padding-bottom: 1px; }
.url b { font-weight: normal; color: #111; }
.exts { display: flex; align-items: center; gap: 16px; margin-left: -4px; }
.exts svg:first-child { margin: 2px -6px 0 0; }
.badge { font: bold 8px "Liberation Sans", sans-serif; fill: #e6c8a8; text-anchor: middle; }
.bookmarks { height: 27px; flex: none; border-bottom: 1px solid #b6b6b6; display: flex; align-items: center; gap: 12px; padding: 0 14px 2px 9px; font: 13px "Noto Sans", sans-serif; letter-spacing: -.1px; color: #111; white-space: nowrap; }
.bm { display: flex; align-items: center; gap: 5px; }
.bm span { line-height: 18px; }
.w-apps { width: 31px; text-indent: 1px; }
.w-scala { width: 29px; }
.w-geeks { width: 34px; }
.w-kgp { width: 22px; }
.w-karim { width: 117px; }
.w-damn { width: 115px; letter-spacing: -.17px; }
.fade { -webkit-mask: linear-gradient(90deg, #000 82%, transparent); mask: linear-gradient(90deg, #000 82%, transparent); }
.other { margin-left: auto; border-left: 1px solid #ccc; padding-left: 10px; }

/* page */
.viewport { height: 780px; flex: none; display: flex; overflow: hidden; }
.page { flex: 1; min-width: 0; }
.header { position: relative; z-index: 2; height: 56px; border-bottom: 2px solid #c6e09b; display: flex; justify-content: space-between; padding: 6px 288px 0 11px; }
.logo { margin-top: 4px; height: 56px; overflow: visible; }
.logo text { font: italic 900 31px "Lato", sans-serif; fill: #0a92cf; }
.logo-shade { fill: #0d5f88; filter: drop-shadow(0 0 1.5px rgba(0,0,0,.7)); }
.session { display: flex; gap: 11px; height: 28px; align-items: center; color: #0076a1; }
.logout { width: 91px; height: 28px; border-radius: 5px; border: 1px solid #c6e09b; background: linear-gradient(#f1f7e5, #c6e09b 55%); display: flex; align-items: center; gap: 9px; padding-left: 12px; font-size: 11px; font-weight: bold; }
.main { height: 724px; display: flex; background: linear-gradient(#0076a1, #008fcc) 0 0 / 100% 41px no-repeat, linear-gradient(#006a96, #006a96) 0 41px / 100% 2px no-repeat, linear-gradient(#d8d8d8, #fff) 0 43px / 100% 125px no-repeat; }
.sidebar { width: 204px; margin: 45px 13px 0 20px; color: #0076a1; }
.sidebar section { border-bottom: 1px solid #93a083; box-shadow: inset 0 -1px #e4efcf; padding: 0 5px 8px; }
.sidebar h3 { font-size: 12px; line-height: 28px; height: 28px; }
.sidebar li, .actions li { display: flex; align-items: center; gap: 6px; height: 18px; white-space: nowrap; }
.sidebar li svg, .actions svg, td svg { width: 16px; height: 16px; }
.sidebar li svg { margin-top: -2px; }
.panel { position: relative; width: 913px; margin-top: 8px; }
.shade { position: absolute; left: -14px; right: -14px; top: -8px; height: 225px; padding: 8px 14px 0; overflow: hidden; -webkit-mask: linear-gradient(#000 70%, transparent 100%); mask: linear-gradient(#000 70%, transparent 100%); }
.shade-box { height: 300px; border-radius: 8px; box-shadow: 0 0 9px 1px rgba(0,0,0,.65); }
.content { position: relative; height: 716px; background: #fff; border-radius: 8px 8px 0 0; padding: 8px 10px 0; }
h1 { font-size: 25px; font-weight: normal; line-height: 28px; color: #0083bb; }
.desc { margin-top: 14px; line-height: 14px; }
.actions { margin: 4px 0 11px; padding-left: 2px; color: #0076a1; }
.actions li { gap: 4.400px; }
.actions .off { color: #222; font-style: italic; }
.tools { display: flex; justify-content: space-between; height: 23px; }
.pager { display: flex; align-items: center; gap: 3px; height: 20px; }
.pager span { width: 21px; height: 20px; border: 1px solid #c6e09b; border-radius: 5px; color: #a6a6a6; font-style: italic; text-align: center; line-height: 18px; }
.pager .wide { width: 28px; }
.pager .cur { width: 20px; margin: 0 1px; }
.pager em { font-style: normal; padding-left: .3px; }
.pager.bottom { margin-top: 3px; }
.search { width: 315px; height: 22px; margin-top: 1px; border: 1px solid #bababa; display: flex; align-items: center; gap: 4px; padding: 0 0 1px 4px; font-size: 13.330px; color: #000; }
table { width: 893px; table-layout: fixed; border-collapse: separate; border-spacing: 0; }
.c1 { width: 40px; } .c2 { width: 66px; } .c3 { width: 121px; } .c4 { width: 181px; } .c5 { width: 250px; } .c6 { width: 107px; } .c7 { width: 128px; }
th, td { padding: 0 0 1px; text-align: left; vertical-align: middle; height: 27px; line-height: 14px; color: #0076a1; }
th { height: 28px; background: #c6e09b; border-bottom: 1px solid #0076a1; }
td:last-child { color: #222; }
tbody tr:nth-child(odd) { background: #e1eecd; }
.cb { display: block; width: 12px; height: 12px; margin-left: 9px; border: 1px solid #a9a9a9; border-radius: 2.500px; background: linear-gradient(#eee, #dadada); box-shadow: inset 0 1px #f6f6f6, 0 1px rgba(0,0,0,.07); }
.scrollbar { width: 15px; background: #f1f1f1; display: flex; flex-direction: column; }
.track { flex: 1; padding: 0 2px; }
.thumb { height: 578px; background: #c1c1c1; }

/* desktop panel */
.taskbar { height: 30px; flex: none; background: #000; color: #fff; display: flex; align-items: center; font: 13px "DejaVu Sans", sans-serif; }
.menu { display: flex; align-items: center; gap: 7px; padding-left: 6px; width: 82px; }
.launchers { display: flex; gap: 11px; width: 347px; }
.launchers svg { width: 20px; height: 20px; }
.windows { display: flex; gap: 8px; }
.win { position: relative; width: 30px; height: 30px; display: grid; place-items: center; }
.win svg { width: 22px; height: 22px; }
.chrome { padding-top: 2px; background: #222; border-bottom: 2px solid #3f9fcf; }
.chrome b { position: absolute; left: 0; top: 1px; font-size: 12px; font-weight: normal; line-height: 14px; }
.open { padding-top: 2px; background: #4a1c10; border-bottom: 2px solid #c0492a; }
.tray { margin-left: auto; display: flex; align-items: center; gap: 13.500px; padding-right: 8px; }
.clock { letter-spacing: -.12px; margin-right: -1px; }
.pc { font: bold 9px "Liberation Sans", sans-serif; fill: #fff; }
.rr { font: 14px "Liberation Serif", serif; fill: #fff; text-anchor: middle; }
```
